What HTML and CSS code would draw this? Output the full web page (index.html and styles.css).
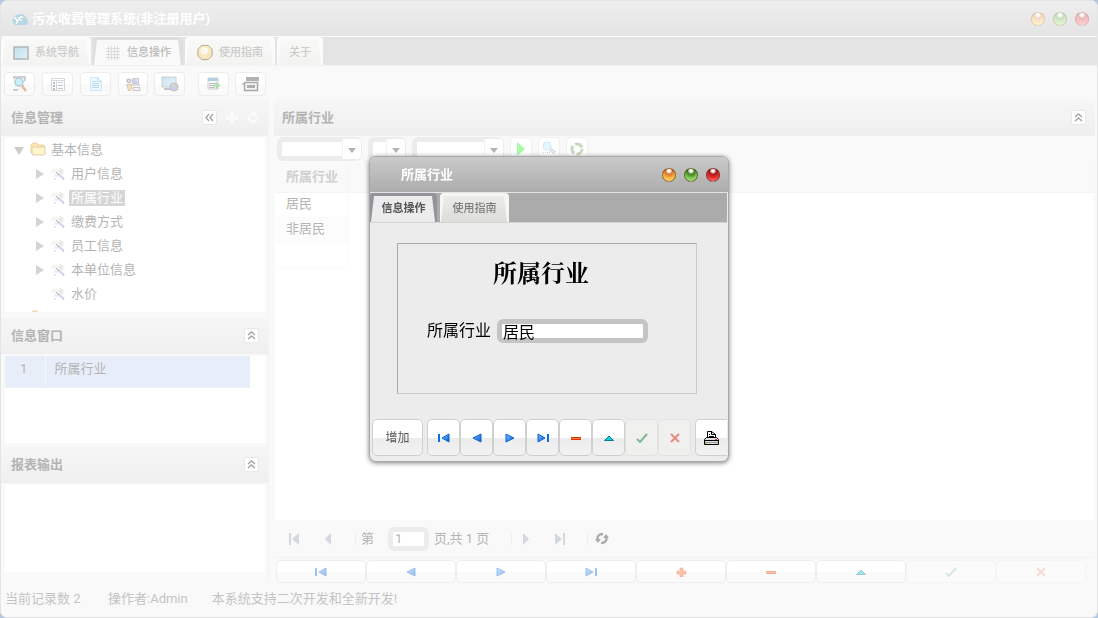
FILE: index.html
```html
<!DOCTYPE html>
<html lang="zh-CN">
<head>
    <meta charset="UTF-8">
    <meta name="viewport" content="width=device-width, initial-scale=1.0">
    <title>污水收费管理系统</title>
    <link rel="stylesheet" href="styles.css">
</head>
<body>

<!-- shared icons -->
<svg class="sprite" width="0" height="0">
    <defs>
        <linearGradient id="gBlue" x1="0" y1="0" x2="1" y2="1">
            <stop offset="0" stop-color="#7cc4ff"/>
            <stop offset="1" stop-color="#0058d8"/>
        </linearGradient>
        <linearGradient id="gScreen" x1="0" y1="0" x2="1" y2="1">
            <stop offset="0" stop-color="#7fc0dc"/>
            <stop offset="1" stop-color="#d4f0fa"/>
        </linearGradient>
    </defs>
    <symbol id="i-first" viewBox="0 0 12 10"><path d="M0 1h2v8H0z" fill="#0a6fe8"/><path d="M11 1v8L4 5z" fill="url(#gBlue)" stroke="#0a60d0"/></symbol>
    <symbol id="i-prev" viewBox="0 0 12 10"><path d="M10 1v8L2 5z" fill="url(#gBlue)" stroke="#0a60d0"/></symbol>
    <symbol id="i-next" viewBox="0 0 12 10"><path d="M2 1v8l8-4z" fill="url(#gBlue)" stroke="#0a60d0"/></symbol>
    <symbol id="i-last" viewBox="0 0 12 10"><path d="M10 1h2v8h-2z" fill="#0a6fe8"/><path d="M1 1v8l7-4z" fill="url(#gBlue)" stroke="#0a60d0"/></symbol>
    <symbol id="i-plus" viewBox="0 0 12 10"><path d="M5 1h3v3h3v3H8v3H5V7H2V4h3z" fill="#ff6a2a" stroke="#d83c00" stroke-width=".6"/></symbol>
    <symbol id="i-minus" viewBox="0 0 12 10"><path d="M1 4h10v3H1z" fill="#ff7a2a"/><path d="M1 4.500h10M1 6.500h10" stroke="#e03808"/></symbol>
    <symbol id="i-up" viewBox="0 0 12 10"><path d="M1.500 7.500L6 3l4.500 4.500z" fill="#20c8dc" stroke="#067a8c"/></symbol>
    <symbol id="i-check" viewBox="0 0 12 10"><path d="M1 6l3 3 7-8" fill="none" stroke="#188038" stroke-width="2"/></symbol>
    <symbol id="i-cross" viewBox="0 0 12 10"><path d="M2 1l8 8M10 1L2 9" stroke="#e02818" stroke-width="2"/></symbol>
    <symbol id="i-chev" viewBox="0 0 9 9"><path d="M1 4l3.500-3L8 4M1 8l3.500-3L8 8" fill="none" stroke="#a4a4a4" stroke-width="1.400"/></symbol>
    <symbol id="i-right" viewBox="0 0 9 10"><path d="M1 0v10l8-5z" fill="#d4d4d4"/></symbol>
    <symbol id="i-down" viewBox="0 0 10 9"><path d="M0 1h10L5 9z" fill="#ccc"/></symbol>
    <symbol id="i-drop" viewBox="0 0 8 5"><path d="M0 0h8L4 5z" fill="#b4b4b4"/></symbol>
    <symbol id="i-folder" viewBox="0 0 16 14"><path d="M1 11V3l2-2h4l1 2h6v9" fill="#fbe6b0" stroke="#ecd3a4"/><path d="M2 12V5h13v7q0 1-1 1H3z" fill="#fff3cc" stroke="#e4cda4"/></symbol>
    <symbol id="i-tool" viewBox="0 0 16 14">
        <path d="M5 2l3 1 2-2 1 3 3 1-3 2v3L8 9 5 11V7L3 5z" fill="#f2f2f2"/>
        <path d="M1 5l3-3M9 1l2 3 2-1M3 10l2-3M3 12h3M9 4l3 3" fill="none" stroke="#d4d4d4" stroke-dasharray="2 1"/>
        <path d="M7 7l6 5" stroke="#e2c8f4" stroke-width="2"/>
        <path d="M5 5l3 3M12 12l1 1" stroke="#bcbcbc"/>
    </symbol>
</svg>

<div class="window">
    <header class="titlebar">
        <svg class="logo" width="18" height="14" viewBox="0 0 18 14">
            <path d="M4 13a4 4 0 0 1-1-7 3 3 0 0 1 4-3 5 5 0 0 1 8 3 4 4 0 0 1 0 7z" fill="#b9d8e6"/>
            <path d="M4 5l2 4M9 5L5 12M9 5h3M9 8h2" fill="none" stroke="#fff" stroke-width="1.500"/>
        </svg>
        <h1>污水收费管理系统(非注册用户)</h1>
        <div class="lights faded">
            <button class="light orange" aria-label="最小化"></button>
            <button class="light green" aria-label="最大化"></button>
            <button class="light red" aria-label="关闭"></button>
        </div>
    </header>

    <nav class="tabs">
        <button class="tab">
            <svg class="dim" width="16" height="14" viewBox="0 0 16 14"><path d="M1 1h14v12H1z" fill="url(#gScreen)" stroke="#5c6b74" stroke-width="1.500"/></svg>
            系统导航
        </button>
        <button class="tab active">
            <svg width="16" height="16" viewBox="0 0 16 16"><path d="M3.500 1v14M6.500 1v14M9.500 1v14M12.500 1v14M1 3.500h14M1 6.500h14M1 9.500h14M1 12.500h14" stroke="#dcdcdc"/></svg>
            信息操作
        </button>
        <button class="tab">
            <svg class="dim" width="16" height="17" viewBox="0 0 17 17">
                <path d="M5 1h7l4 4v7l-4 4H5l-4-4V5z" fill="#ffd878" stroke="#5a4628"/>
                <circle cx="8" cy="7" r="4" fill="#fff8d8"/>
                <path d="M6 6q0-2 2-2t2 2-2 3v1M8 12v1" fill="none" stroke="#fff" stroke-width="1.500"/>
            </svg>
            使用指南
        </button>
        <button class="tab">关于</button>
    </nav>

    <div class="toolbar">
        <button aria-label="查询"><svg class="dim" width="16" height="16" viewBox="0 0 16 16"><path d="M2 1h11v13H2z" fill="#f2f2f2"/><path d="M2 3V1h11v4M1 14h5M11 9v2" fill="none" stroke="#777" stroke-width="1.500"/><circle cx="7" cy="6" r="4" fill="#8edcf4" stroke="#5594a8" stroke-width="1.500"/><path d="M10 10l4 5" stroke="#c46a38" stroke-width="2.500"/></svg></button>
        <button aria-label="列表"><svg class="dim" width="14" height="13" viewBox="0 0 14 13"><path d="M.5.5h13v12H.5z" fill="#fff" stroke="#aaa"/><path d="M1 2.500h12M5.500 3v9" stroke="#aaa"/><path d="M3 4v8" stroke="#3a7fa8" stroke-width="2" stroke-dasharray="2 1"/><path d="M7 4.500h2M10 4.500h2M7 7.500h5M7 10.500h5" stroke="#888"/></svg></button>
        <button aria-label="文档"><svg class="dim" width="14" height="16" viewBox="0 0 14 16"><path d="M1.500 1.500h7l4 4v9h-11z" fill="#e2f3ff" stroke="#9acdf0"/><path d="M8.500 1v4.500H13M3 5.500h4M3 7.500h7M3 9.500h7M3 11.500h7" fill="none" stroke="#67b0e0"/></svg></button>
        <button class="person" aria-label="操作员"><svg class="dim" width="16" height="16" viewBox="0 0 16 16"><path d="M7.500 2.500h6v5h-6z" fill="#9898f0" stroke="#888"/><path d="M10 3h3v3z" fill="#e8c0f8"/><path d="M8 11.500h7v3H8z" fill="#eee" stroke="#888"/><path d="M1 4h4M1 9h14" stroke="#777"/><circle cx="4" cy="5" r="2" fill="#bbb" stroke="#666"/><path d="M2.500 8.500h4v3l-1 3h-2l-1-3z" fill="#f0c480" stroke="#b88c50"/></svg></button>
        <button class="tight" aria-label="网络"><svg class="dim" width="18" height="16" viewBox="0 0 18 16"><path d="M1 1h14v10H1z" fill="url(#gScreen)" stroke="#8a9aa0"/><path d="M3 13h8" stroke="#888" stroke-width="2"/><circle cx="13" cy="11" r="4" fill="#8f9ce0" stroke="#777"/><path d="M11 10l2 2 2-4 1 4z" fill="#7cc060"/><path d="M10 9l3-1 1 2" stroke="#e8a050" fill="none"/></svg></button>
        <button class="sep" aria-label="导出"><svg class="dim" width="14" height="14" viewBox="0 0 14 14"><path d="M1 1h10v11H1z" fill="#eee" stroke="#999"/><path d="M1 1h10v3H1z" fill="#5aa0c0"/><path d="M2 6.500h8M2 8.500h5M2 10.500h6" stroke="#777"/><path d="M7 8.500h6M10 5.500v6" stroke="#52b85c" stroke-width="2"/></svg></button>
        <button class="tight" aria-label="打印"><svg class="dim" width="17" height="15" viewBox="0 0 17 15"><path d="M4 0h13v4H4z" fill="#555"/><path d="M2.500 5.500h13v8h-13z" fill="#eee" stroke="#444" stroke-width="1.500"/><path d="M5 8h8v3H5z" fill="#555"/><path d="M0 7h3" stroke="#444"/></svg></button>
    </div>

    <div class="main">
        <aside class="side">
            <section class="panel">
                <div class="panel-head">
                    <h2>信息管理</h2>
                    <button class="mini" aria-label="收起"><svg class="left" width="9" height="9"><use href="#i-chev"/></svg></button>
                    <button class="bare" aria-label="添加"><svg width="12" height="12" viewBox="0 0 12 12"><path d="M4 0h4v4h4v4H8v4H4V8H0V4h4z" fill="#fafafa"/></svg></button>
                    <button class="bare" aria-label="刷新"><svg width="12" height="12" viewBox="0 0 12 12"><path d="M10 5a4 4 0 1 1-3-3" fill="none" stroke="#fafafa" stroke-width="2.500"/><path d="M6 0l5 1-3 4z" fill="#fafafa"/></svg></button>
                </div>
                <ul class="tree box">
                    <li class="root"><svg width="10" height="9"><use href="#i-down"/></svg><svg class="folder" width="16" height="14"><use href="#i-folder"/></svg><span>基本信息</span></li>
                    <li><svg width="9" height="10"><use href="#i-right"/></svg><svg class="tool" width="16" height="14"><use href="#i-tool"/></svg><span>用户信息</span></li>
                    <li class="selected"><svg width="9" height="10"><use href="#i-right"/></svg><svg class="tool" width="16" height="14"><use href="#i-tool"/></svg><span>所属行业</span></li>
                    <li><svg width="9" height="10"><use href="#i-right"/></svg><svg class="tool" width="16" height="14"><use href="#i-tool"/></svg><span>缴费方式</span></li>
                    <li><svg width="9" height="10"><use href="#i-right"/></svg><svg class="tool" width="16" height="14"><use href="#i-tool"/></svg><span>员工信息</span></li>
                    <li><svg width="9" height="10"><use href="#i-right"/></svg><svg class="tool" width="16" height="14"><use href="#i-tool"/></svg><span>本单位信息</span></li>
                    <li><svg width="9" height="10"></svg><svg class="tool" width="16" height="14"><use href="#i-tool"/></svg><span>水价</span></li>
                    <li class="root"><svg width="10" height="9"></svg><svg class="folder" width="16" height="14"><use href="#i-folder"/></svg></li>
                </ul>
            </section>

            <section class="panel">
                <div class="panel-head">
                    <h2>信息窗口</h2>
                    <button class="mini" aria-label="折叠"><svg width="9" height="9"><use href="#i-chev"/></svg></button>
                </div>
                <div class="box short">
                    <table class="info">
                        <tr><td class="no">1</td><td>所属行业</td></tr>
                    </table>
                </div>
            </section>

            <section class="panel">
                <div class="panel-head">
                    <h2>报表输出</h2>
                    <button class="mini" aria-label="折叠"><svg width="9" height="9"><use href="#i-chev"/></svg></button>
                </div>
                <div class="box short"></div>
            </section>
        </aside>

        <section class="content">
            <div class="panel-head">
                <h2>所属行业</h2>
                <button class="mini" aria-label="折叠"><svg width="9" height="9"><use href="#i-chev"/></svg></button>
            </div>
            <div class="filters">
                <div class="combo field"><select aria-label="字段"><option></option></select><svg width="18" height="20"><use href="#i-drop" x="5" y="9" width="8" height="5"/></svg></div>
                <div class="combo operator"><select aria-label="条件"><option></option></select><svg width="18" height="20"><use href="#i-drop" x="5" y="9" width="8" height="5"/></svg></div>
                <div class="combo value"><select aria-label="值"><option></option></select><svg width="18" height="20"><use href="#i-drop" x="5" y="9" width="8" height="5"/></svg></div>
                <button aria-label="执行"><svg width="10" height="14" viewBox="0 0 10 14"><path d="M1 0v14l8-7z" fill="#a6fba6"/></svg></button>
                <button aria-label="查找"><svg class="dim" width="16" height="16" viewBox="0 0 16 16"><circle cx="6" cy="5" r="4" fill="#c8f0ff" stroke="#9accec"/><path d="M9 8l5 4" stroke="#8aa0d0" stroke-width="3"/><path d="M9 8l5 4" stroke="#fff"/><path d="M2 11.500h8" stroke="#aaa" stroke-dasharray="1 1"/></svg></button>
                <button aria-label="刷新"><svg class="dim" width="16" height="16" viewBox="0 0 16 16"><circle cx="8" cy="8" r="5" fill="none" stroke="#8cac6c" stroke-width="3" stroke-dasharray="8 2.500"/></svg></button>
            </div>
            <div class="grid">
                <table class="records">
                    <thead><tr><th>所属行业</th><th class="rest"></th></tr></thead>
                    <tbody>
                        <tr><td>居民</td></tr>
                        <tr class="alt"><td>非居民</td></tr>
                        <tr><td></td></tr>
                    </tbody>
                </table>
            </div>
            <div class="pager">
                <button aria-label="首页"><svg width="12" height="12" viewBox="0 0 12 12"><path d="M1 0h2v12H1zM11 0v12L4 6z" fill="#d3d7df"/></svg></button>
                <button aria-label="上一页"><svg width="12" height="12" viewBox="0 0 12 12"><path d="M9 0v12L3 6z" fill="#d3d7df"/></svg></button>
                <i></i>
                <label for="page">第</label>
                <input id="page" type="text" value="1">
                <span class="total">页,共 1 页</span>
                <i></i>
                <button aria-label="下一页"><svg width="12" height="12" viewBox="0 0 12 12"><path d="M3 0v12l6-6z" fill="#d3d7df"/></svg></button>
                <button aria-label="末页"><svg width="12" height="12" viewBox="0 0 12 12"><path d="M9 0h2v12H9zM1 0v12l7-6z" fill="#d3d7df"/></svg></button>
                <i></i>
                <button aria-label="刷新"><svg width="14" height="13" viewBox="0 0 14 13"><path d="M2.500 8C2 4 4 2 8 2M11.500 5c.5 4-1.500 6-5.500 6" fill="none" stroke="#acacac" stroke-width="2.500"/><path d="M0 7h6l-3 4zM14 6H8l3-4z" fill="#acacac"/></svg></button>
            </div>
            <div class="record-nav">
                <button aria-label="第一条"><svg width="12" height="10"><use href="#i-first"/></svg></button>
                <button aria-label="上一条"><svg width="12" height="10"><use href="#i-prev"/></svg></button>
                <button aria-label="下一条"><svg width="12" height="10"><use href="#i-next"/></svg></button>
                <button aria-label="最后一条"><svg width="12" height="10"><use href="#i-last"/></svg></button>
                <button aria-label="增加"><svg width="12" height="10"><use href="#i-plus"/></svg></button>
                <button aria-label="删除"><svg width="12" height="10"><use href="#i-minus"/></svg></button>
                <button aria-label="编辑"><svg width="12" height="10"><use href="#i-up"/></svg></button>
                <button disabled aria-label="保存"><svg width="12" height="10"><use href="#i-check"/></svg></button>
                <button disabled aria-label="取消"><svg width="12" height="10"><use href="#i-cross"/></svg></button>
            </div>
        </section>
    </div>

    <footer class="status">
        <span class="count">当前记录数 2</span>
        <span class="operator-name">操作者:Admin</span>
        <span>本系统支持二次开发和全新开发!</span>
    </footer>
</div>

<!-- record editor -->
<div class="mask">
    <div class="dialog" role="dialog" aria-labelledby="dlgTitle">
        <header class="dialog-title">
            <h2 id="dlgTitle">所属行业</h2>
            <div class="lights">
                <button class="light orange" aria-label="最小化"></button>
                <button class="light green" aria-label="最大化"></button>
                <button class="light red" aria-label="关闭"></button>
            </div>
        </header>
        <nav class="dialog-tabs">
            <button class="tab active">信息操作</button>
            <button class="tab">使用指南</button>
        </nav>
        <form class="form">
            <h3>所属行业</h3>
            <div class="row">
                <label for="trade">所属行业</label>
                <input id="trade" type="text" value="居民">
            </div>
        </form>
        <div class="dialog-nav">
            <button class="add">增加</button>
            <div class="group">
                <button aria-label="第一条"><svg width="12" height="10"><use href="#i-first"/></svg></button>
                <button aria-label="上一条"><svg width="12" height="10"><use href="#i-prev"/></svg></button>
                <button aria-label="下一条"><svg width="12" height="10"><use href="#i-next"/></svg></button>
                <button aria-label="最后一条"><svg width="12" height="10"><use href="#i-last"/></svg></button>
                <button aria-label="删除"><svg width="12" height="10"><use href="#i-minus"/></svg></button>
                <button aria-label="编辑"><svg width="12" height="10"><use href="#i-up"/></svg></button>
                <button disabled aria-label="保存"><svg width="12" height="10"><use href="#i-check"/></svg></button>
                <button disabled aria-label="取消"><svg width="12" height="10"><use href="#i-cross"/></svg></button>
            </div>
            <button class="printer" aria-label="打印">
                <svg width="17" height="16" viewBox="0 0 17 16">
                    <path d="M4.500 8V1.500h4l4 3V8" fill="#fff" stroke="#000"/>
                    <path d="M8.500 1v3.500h4M6 4.500h1M6 6.500h5" fill="none" stroke="#000"/>
                    <path d="M3.500 7.500h10l2 2v5h-14v-5z" fill="#ddd" stroke="#000"/>
                    <path d="M1 10.500h15" stroke="#000"/>
                    <path d="M2 12.500h13" stroke="#999"/>
                    <path d="M12 9.500h2" stroke="#e04040"/>
                    <path d="M2 13.500h2" stroke="#c8c820"/>
                </svg>
            </button>
        </div>
    </div>
</div>

</body>
</html>
```
FILE: styles.css
```css
* {
    box-sizing: border-box;
}
body {
    margin: 0;
    background: #b4c6e0;
    font-family: Roboto, "Noto Sans CJK SC", sans-serif;
    font-size: 13px;
    line-height: 20px;
    color: #b4b4b4;
}
h1, h2, h3, ul {
    margin: 0;
    padding: 0;
    font-size: 13px;
    font-weight: bold;
}
button, input, select {
    font: inherit;
    color: inherit;
    margin: 0;
    padding: 0;
    border: none;
    background: none;
}
button {
    display: flex;
    align-items: center;
    justify-content: center;
}
svg {
    display: block;
    flex: none;
}
.sprite {
    position: absolute;
}
.dim {
    opacity: 0.45;
}

/* window */
.window {
    min-height: 100vh;
    display: flex;
    flex-direction: column;
    background: #f9f9f9;
    border: 1px solid #e4e4e4;
    border-radius: 7px;
    overflow: hidden;
}
.titlebar {
    display: flex;
    align-items: center;
    height: 36px;
    padding: 0 8px 0 10px;
    background: linear-gradient(#eeeeee, #e4e4e4);
    border-bottom: 1px solid #fafafa;
}
.titlebar h1 {
    flex: 1;
    margin-left: 3px;
    color: #fff;
}
.lights {
    display: flex;
    gap: 8px;
}
.light {
    width: 14px;
    height: 14px;
    border-radius: 50%;
    border: 1px solid rgba(60, 20, 0, 0.5);
}
.light.orange {
    background: radial-gradient(circle at 50% 15%, #fff 0, #fff 10%, #d8702a 30%, #ffc04a 65%, #ffe07a);
}
.light.green {
    background: radial-gradient(circle at 50% 15%, #fff 0, #fff 10%, #3f8020 30%, #86cc5c 65%, #b4ec8c);
}
.light.red {
    background: radial-gradient(circle at 50% 15%, #fff 0, #fff 10%, #a81818 30%, #f03838 65%, #ff9a9a);
}
.faded .light {
    border-color: rgba(60, 20, 0, 0.15);
}
.faded .orange {
    background: radial-gradient(circle at 50% 15%, #fff 0, #fff 10%, #f2d4c2 30%, #feecca 65%, #fff6d2);
}
.faded .green {
    background: radial-gradient(circle at 50% 15%, #fff 0, #fff 10%, #c8dcc0 30%, #dcf0cf 65%, #e8fadc);
}
.faded .red {
    background: radial-gradient(circle at 50% 15%, #fff 0, #fff 10%, #e8bcbc 30%, #fbc6c6 65%, #ffe2e2);
}

/* tabs */
.tabs {
    display: flex;
    gap: 2px;
    height: 29px;
    background: #e4e4e4;
    border-bottom: 1px solid #f2f2f2;
}
.tab {
    position: relative;
    isolation: isolate;
    gap: 6px;
    padding: 3px 12px 0;
    font-size: 11px;
    font-weight: 500;
    color: #cbcbcb;
    background: #fbfbfb;
    border-radius: 4px 4px 0 0;
}
.tab::before {
    content: "";
    position: absolute;
    inset: 0;
    z-index: -1;
    background: linear-gradient(#f9f9f7, #f3f3f1);
    clip-path: polygon(4px 3px, calc(100% - 5px) 3px, calc(100% - 2px) 100%, 1px 100%);
}
.tab.active {
    color: #bcbcbc;
    background: #dedee1;
}
.tab.active::before {
    background: #f9f9f9;
}

/* toolbar */
.toolbar {
    display: flex;
    gap: 7px;
    padding: 6px 3px 4px;
}
.toolbar button {
    width: 31px;
    height: 24px;
    background: linear-gradient(#fff 50%, #fafafa 50%);
    border: 1px solid #ededed;
    border-radius: 4px;
}
.toolbar .person {
    width: 30px;
}
.toolbar .tight {
    margin-left: -1px;
}
.toolbar .sep {
    margin-left: 6px;
}

/* columns */
.main {
    flex: 1;
    display: flex;
    gap: 5px;
}
.side {
    width: 268px;
    border-right: 1px solid #f2f2f2;
}
.panel {
    padding-bottom: 4px;
}
.panel-head {
    display: flex;
    align-items: center;
    gap: 9px;
    height: 36px;
    padding: 0 9px 0 10px;
    background: linear-gradient(#f6f6f6, #efefef);
}
.panel-head h2 {
    flex: 1;
}
.mini {
    width: 15px;
    height: 15px;
    margin-bottom: 2px;
    background: #fff;
    border: 1px solid #e8e8e8;
    border-radius: 2px;
}
.mini .left {
    transform: rotate(-90deg);
}
.box {
    margin: 2px 3px 0 4px;
    background: #fff;
    overflow: hidden;
}
.box.short {
    height: 87px;
}

/* tree */
.tree {
    height: 174px;
    margin-bottom: 2px;
    list-style: none;
    font-weight: normal;
}
.tree li {
    display: flex;
    align-items: center;
    height: 24px;
    padding-left: 30px;
}
.tree li.root {
    padding-left: 9px;
}
.folder {
    margin: 0 3px 2px 6px;
}
.tool {
    margin-left: 7px;
}
.tree span {
    padding: 0 2px;
    line-height: 16px;
}
.tree .tool + span {
    margin-left: 2px;
}
.tree .selected span {
    background: #d6d6d6;
    color: #fff;
}

/* info table */
.info {
    width: 245px;
    border-collapse: collapse;
}
.info td {
    height: 31px;
    padding: 0 0 4px 9px;
    background: #e8eef9;
    border-bottom: 1px solid #eef2f8;
}
.info .no {
    width: 40px;
    padding: 0 2px 4px 0;
    text-align: center;
    border-right: 1px solid #f6f8fc;
}

/* content */
.content {
    flex: 1;
    min-width: 0;
    display: flex;
    flex-direction: column;
    margin-right: 2px;
}
.content .panel-head {
    padding-left: 8px;
}
.filters {
    display: flex;
    gap: 6px;
    padding: 1px 3px 2px;
}
.filters button {
    width: 22px;
    height: 24px;
    background: #fff;
    border: 1px solid #f0f0f0;
    border-radius: 4px;
}
.combo {
    position: relative;
    height: 24px;
    border: 5px solid #ececec;
    border-right-width: 1px;
    border-radius: 6px;
    background: #fff;
}
.combo select {
    display: block;
    width: 100%;
    height: 14px;
    appearance: none;
}
.combo svg {
    position: absolute;
    right: 0;
    top: -3px;
    background: #fff;
    border-radius: 0 4px 4px 0;
    box-shadow: -1px 0 #f2f2f2;
    pointer-events: none;
}
.field {
    width: 85px;
}
.operator {
    width: 38px;
}
.value {
    width: 92px;
}
.grid {
    flex: 1;
    margin: 0 1px;
    background: #fff;
}
.records {
    width: 100%;
    border-collapse: collapse;
}
.records th, .records td {
    width: 73px;
    height: 25px;
    padding: 0 0 2px 11px;
    text-align: left;
    border-bottom: 1px solid #fafafa;
    border-right: 1px solid #fafafa;
}
.records th {
    height: 29px;
    padding-bottom: 0;
    color: #d0d0d0;
    background: #f9f9f9;
    border-color: #f5f5f5;
}
.records th.rest {
    width: auto;
}
.records .alt td {
    background: #fcfcfc;
}

/* pager */
.pager {
    display: flex;
    align-items: center;
    height: 38px;
    padding-left: 8px;
    border-bottom: 1px solid #f3f3f3;
}
.pager button {
    width: 24px;
    height: 24px;
}
.pager button + button {
    margin-left: 10px;
}
.pager i {
    width: 1px;
    height: 14px;
    margin: 0 2px 0 15px;
    background: #f0f0f0;
}
.pager label {
    width: 27px;
    margin-left: 3px;
}
.pager input {
    width: 41px;
    height: 24px;
    padding: 0 7px;
    border-radius: 6px;
    background: #fff;
    box-shadow: inset 0 0 0 5px #ececec;
}
.pager .total {
    min-width: 62px;
    margin-left: 5px;
}
.record-nav {
    display: flex;
    padding: 2px 9px 0 2px;
}
.record-nav button {
    flex: 1;
    height: 23px;
    background: linear-gradient(#fff 50%, #fafafa 50%);
    border: 1px solid #eeeeee;
    border-radius: 5px;
}
.record-nav svg {
    opacity: 0.4;
}
.record-nav button:disabled {
    background: #fbfbfb;
    border-color: #f5f5f5;
}
.record-nav button:disabled svg {
    opacity: 0.15;
}

/* status bar */
.status {
    display: flex;
    gap: 24px;
    padding: 6px 4px 8px;
    color: #c4c4c4;
}
.status .count {
    min-width: 79px;
}
.status .operator-name {
    min-width: 79px;
}

/* dialog */
.mask {
    position: fixed;
    inset: 0;
    display: grid;
    place-items: center;
}
.dialog {
    width: 360px;
    background: #ececec;
    border: 1px solid #a8a8a8;
    border-radius: 7px;
    box-shadow: 0 1px 5px rgba(0, 0, 0, 0.5);
    overflow: hidden;
}
.dialog-title {
    display: flex;
    align-items: center;
    justify-content: space-between;
    height: 36px;
    padding: 0 8px 0 31px;
    background: linear-gradient(#cacaca, #acacac);
    border-bottom: 1px solid #e4e4e4;
}
.dialog-title h2 {
    color: #fff;
}
.dialog-tabs {
    display: flex;
    gap: 3px;
    height: 30px;
    margin-right: 1px;
    background: #ababab;
    border-bottom: 1px solid #d4d4d4;
}
.dialog-tabs .tab {
    width: 69px;
    padding: 3px 0 0;
    color: #7c7c7c;
    font-weight: 500;
    background: #f6f6f4;
}
.dialog-tabs .tab::before {
    background: linear-gradient(#eeeeec, #dcdcd8);
}
.dialog-tabs .tab.active {
    width: 67px;
    color: #555;
    font-weight: bold;
    background: #96929c;
}
.dialog-tabs .tab.active::before {
    background: #ececec;
}
.form {
    margin: 20px 31px 25px 27px;
    padding: 15px 29px 50px;
    border: 1px solid #cacaca;
    border-top-color: #aaa;
    border-left-color: #aaa;
    color: #000;
}
.form h3 {
    margin-bottom: 30px;
    padding-right: 12px;
    font-family: "Liberation Serif", "Noto Serif CJK SC", "Noto Sans CJK SC", serif;
    font-size: 24px;
    line-height: 30px;
    text-align: center;
}
.form .row {
    display: flex;
    align-items: center;
    gap: 6px;
    font-size: 16px;
}
.form input {
    width: 151px;
    height: 24px;
    padding: 0 6px;
    border-radius: 6px;
    background: #fff;
    box-shadow: inset 0 0 0 5px #c3c4c6;
}
.dialog-nav {
    display: flex;
    gap: 4px;
    padding: 0 1px 5px 2px;
}
.dialog-nav button {
    width: 33px;
    height: 37px;
    background: linear-gradient(#fff 50%, #ececec 50%, #f2f2f2);
    border: 1px solid #d0d0d0;
    border-radius: 5px;
}
.dialog-nav button:disabled {
    background: #f0f0ee;
    border-color: #e2e2e0;
}
.dialog-nav button:disabled svg {
    opacity: 0.5;
}
.dialog-nav .group {
    display: flex;
}
.dialog-nav .add {
    width: 51px;
    font-size: 12px;
    color: #555;
}
.dialog-nav .printer {
    flex: 1;
    border-right: none;
    border-radius: 5px 0 0 5px;
}
```
